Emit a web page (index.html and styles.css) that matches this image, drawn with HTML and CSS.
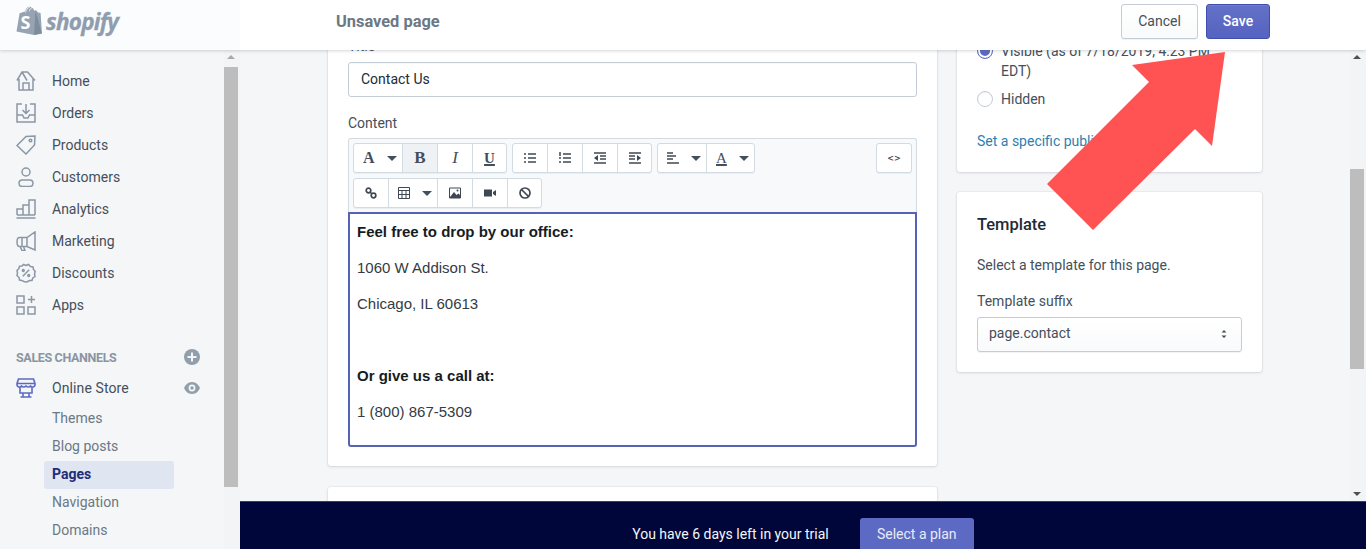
FILE: index.html
```html
<!DOCTYPE html>
<html lang="en">
<head>
<meta charset="utf-8">
<title>Unsaved page</title>
<link rel="stylesheet" href="styles.css">
</head>
<body>
<div class="app">
  <header class="topbar">
    <div class="brand">
      <svg class="bag" viewBox="0 0 26 29">
        <path class="bag-fill" d="M0.500 25.500 3.600 7.200 9 5.500C9.600 2.800 11.600.8 13.600.8c1 0 1.600.4 2 1 1.300.1 2.200 1.600 2.500 2.900l1.600-.4.8.5 1.600 1.700 2.500.4 1.400 20.800L18 29Z"/>
        <path class="bag-line" d="M9.600 6.500C10 3.500 11.700 1.500 13.600 1.500M13.400 5.200C13.800 3.500 14.700 2 15.800 2"/>
        <path class="bag-shade" d="M19.500 4.500 25.800 27.200 18 29Z"/>
        <text class="bag-s" x="4.500" y="23">S</text>
      </svg>
      <span class="wordmark">shopify</span>
    </div>
    <div class="bar-main">
      <span class="bar-title">Unsaved page</span>
      <div class="bar-actions">
        <button class="btn btn-cancel">Cancel</button>
        <button class="btn btn-save">Save</button>
      </div>
    </div>
  </header>

  <div class="body">
    <aside class="sidebar">
      <nav class="nav">
        <a class="nav-item">
          <svg class="nav-icon" viewBox="0 0 20 20"><path d="M1 9.500 6 1h5.500L19 9.500M3 8v11h14V8M7 19v-7h6v7M6 1l5 8.500"/></svg>
          Home
        </a>
        <a class="nav-item">
          <svg class="nav-icon" viewBox="0 0 20 20"><path d="M6 1H1v18h18V1h-5M1 12h5.500l1.500 3h4l1.500-3H19M10 1v9M6.500 7l3.500 3.500L13.500 7"/></svg>
          Orders
        </a>
        <a class="nav-item">
          <svg class="nav-icon" viewBox="0 0 20 20"><path d="M1 10.500 10 1.500l9-.5-.5 9-8.500 9Z"/><circle cx="14.500" cy="5.500" r="1.300"/></svg>
          Products
        </a>
        <a class="nav-item">
          <svg class="nav-icon" viewBox="0 0 20 20"><circle cx="10" cy="5" r="4"/><rect x="3" y="13" width="14" height="6.500" rx="3.250"/></svg>
          Customers
        </a>
        <a class="nav-item">
          <svg class="nav-icon" viewBox="0 0 20 20"><path d="M1 16v-6h6v6M7 16V6h6v10M13 16V1h6v15M1 16h18M0.500 19h19"/></svg>
          Analytics
        </a>
        <a class="nav-item">
          <svg class="nav-icon" viewBox="0 0 20 20"><path d="M19 1v18L11 15.500H6V6.500h5ZM11 6.500v9M6 6.500H3.500C2 6.500 1 8 1 11s1 4.500 2.500 4.500H6M4 15.500l2 4h3l-1.500-4"/></svg>
          Marketing
        </a>
        <a class="nav-item">
          <svg class="nav-icon" viewBox="0 0 20 20"><path d="M7.500 1.500 10 2.500 12.500 1.500 14.500 3.500 17 4 17.500 6.500 19.200 8.500 18.500 11 19 13.500 16.800 15 16 17.500 13.500 17.500 11 19 8.500 18.800 6 17.500 3.500 17 3 14.500 1 12.500 1.500 10 1 7.500 3 5.500 3.500 3.200 6 3Z"/><path d="M6.800 13.200 13.200 6.800"/><circle cx="7.300" cy="7.500" r=".9"/><circle cx="12.700" cy="12.500" r=".9"/></svg>
          Discounts
        </a>
        <a class="nav-item">
          <svg class="nav-icon" viewBox="0 0 20 20"><path d="M1 1h7v7H1ZM1 12h7v7H1ZM12 12h7v7h-7ZM15.500 1v7M12 4.500h7"/></svg>
          Apps
        </a>
      </nav>
      <div class="channels">
        <span class="channels-title">SALES CHANNELS</span>
        <svg class="round-icon" viewBox="0 0 16 16"><circle class="round-fill" cx="8" cy="8" r="8"/><path class="round-cut" d="M8 3.500v9M3.500 8h9"/></svg>
      </div>
      <div class="store-row">
        <svg class="store-icon" viewBox="0 0 20 20"><path d="M2.500 1h15l1.500 4.500v1.500a2.500 2.500 0 0 1-4.500 1 3 3 0 0 1-4.500 0 3 3 0 0 1-4.500 0A2.500 2.500 0 0 1 1 7V5.500ZM1 5.500h18M4 9.500V15h12V9.500M7 15v4h6v-4M4.500 19h11"/></svg>
        <span class="store-name">Online Store</span>
        <svg class="eye-icon" viewBox="0 0 16 12"><path class="round-fill" d="M8 0C4 0 1.300 3 0 6c1.300 3 4 6 8 6s6.700-3 8-6c-1.300-3-4-6-8-6Z"/><circle class="eye-white" cx="8" cy="6" r="3.400"/><circle class="round-fill" cx="8" cy="6" r="1.700"/></svg>
      </div>
      <ul class="subnav">
        <li class="sub-item">Themes</li>
        <li class="sub-item">Blog posts</li>
        <li class="sub-item sub-active">Pages</li>
        <li class="sub-item">Navigation</li>
        <li class="sub-item">Domains</li>
      </ul>
    </aside>
    <div class="scrollbar side-scroll">
      <span class="arrow-up"></span>
      <span class="thumb side-thumb"></span>
    </div>

    <div class="right">
      <div class="main-row">
        <main class="main">
          <div class="col-left">
            <section class="card card-editor">
              <label class="field-label">Title</label>
              <div class="input">Contact Us</div>
              <label class="field-label content-label">Content</label>
              <div class="toolbar">
                <div class="tool-rows">
                  <div class="tool-row">
                    <div class="group">
                      <span class="tool tool-wide"><span class="glyph glyph-a">A</span><i class="caret"></i></span>
                      <span class="tool tool-on"><b class="glyph">B</b></span>
                      <span class="tool"><em class="glyph">I</em></span>
                      <span class="tool"><u class="glyph glyph-u">U</u></span>
                    </div>
                    <div class="group">
                      <span class="tool"><svg class="ti" viewBox="0 0 12 12"><path d="M0 2h2M4 2h8M0 6h2M4 6h8M0 10h2M4 10h8"/></svg></span>
                      <span class="tool"><svg class="ti" viewBox="0 0 12 12"><path d="M1 0v4M0 6h2M0 10h2M4 2h8M4 6h8M4 10h8"/></svg></span>
                      <span class="tool"><svg class="ti" viewBox="0 0 12 12"><path d="M0 1h12M6 4h6M6 7h6M0 11h12"/><path class="ti-fill" d="M4 3v6L0 6Z"/></svg></span>
                      <span class="tool"><svg class="ti" viewBox="0 0 12 12"><path d="M0 1h12M0 4h6M0 7h6M0 11h12"/><path class="ti-fill" d="M8 3v6l4-3Z"/></svg></span>
                    </div>
                    <div class="group">
                      <span class="tool tool-wide"><svg class="ti" viewBox="0 0 12 12"><path d="M0 1h6M0 4h9M0 7h6M0 11h12"/></svg><i class="caret"></i></span>
                      <span class="tool tool-wide"><span class="glyph glyph-color">A</span><i class="caret"></i></span>
                    </div>
                  </div>
                  <div class="tool-row">
                    <div class="group">
                      <span class="tool"><svg class="ti ti-link" viewBox="0 0 12 12"><circle cx="3.500" cy="3.500" r="2.300"/><circle cx="8.500" cy="8.500" r="2.300"/><path d="M5 5l2 2"/></svg></span>
                      <span class="tool tool-wide"><svg class="ti ti-thin" viewBox="0 0 12 12"><path d="M.5.500h11v11H.5ZM.5 3.500h11M.5 7.500h11M4 3.500v8M8 3.500v8"/></svg><i class="caret"></i></span>
                      <span class="tool"><svg class="ti ti-thin" viewBox="0 0 12 12"><path d="M.5 1h11v10H.5Z"/><path class="ti-fill" d="M1 10 5 5l2.500 3 2-1.500L11 8v3H1Z"/><circle class="ti-fill" cx="8.500" cy="3.500" r="1"/></svg></span>
                      <span class="tool"><svg class="ti" viewBox="0 0 12 12"><path class="ti-fill" d="M0 2.500h8v7H0ZM9 5l3-2v6L9 7Z"/></svg></span>
                      <span class="tool"><svg class="ti ti-link" viewBox="0 0 12 12"><circle cx="6" cy="6" r="5"/><path d="M2.500 2.500l7 7"/></svg></span>
                    </div>
                  </div>
                </div>
                <div class="group"><span class="tool tool-code">&lt;&gt;</span></div>
              </div>
              <div class="editor">
                <p class="editor-p"><strong>Feel free to drop by our office:</strong></p>
                <p class="editor-p">1060 W Addison St.</p>
                <p class="editor-p">Chicago, IL 60613</p>
                <p class="editor-p">&nbsp;</p>
                <p class="editor-p"><strong>Or give us a call at:</strong></p>
                <p class="editor-p">1 (800) 867-5309</p>
              </div>
            </section>
            <section class="card card-next"></section>
          </div>
          <div class="col-right">
            <section class="card card-vis">
              <div class="radio-row">
                <span class="radio radio-on"></span>
                <span class="radio-text">Visible (as of 7/18/2019, 4:23 PM EDT)</span>
              </div>
              <div class="radio-row radio-row-2">
                <span class="radio"></span>
                <span class="radio-text">Hidden</span>
              </div>
              <a class="link">Set a specific publish date</a>
            </section>
            <section class="card card-template">
              <h2 class="card-title">Template</h2>
              <p class="card-text">Select a template for this page.</p>
              <label class="suffix-label">Template suffix</label>
              <div class="select">
                <span class="select-value">page.contact</span>
                <svg class="select-arrows" viewBox="0 0 6 10"><path d="M3 1 5.500 3.500H.5ZM3 9 .5 6.500H5.500Z"/></svg>
              </div>
            </section>
          </div>
        </main>
        <div class="scrollbar main-scroll">
          <span class="arrow-up"></span>
          <span class="thumb main-thumb"></span>
          <span class="arrow-down"></span>
        </div>
      </div>
      <footer class="banner">
        <span class="banner-text">You have 6 days left in your trial</span>
        <button class="btn-plan">Select a plan</button>
      </footer>
    </div>
  </div>

  <svg class="big-arrow" viewBox="0 0 190 190">
    <path d="M178 2 85 15 102 32 0 134 46 180 148 79 165 96Z"/>
  </svg>
</div>
</body>
</html>
```

FILE: styles.css
```css
* { box-sizing: border-box; }
html, body { margin: 0; height: 100%; }
body {
  font-family: Roboto, "Liberation Sans", sans-serif;
  font-size: 14px;
  color: #212b36;
  background: #f4f6f8;
  overflow: hidden;
}
.app { position: relative; display: flex; flex-direction: column; height: 100vh; overflow: hidden; }

/* Top bar */
.topbar {
  position: relative;
  z-index: 5;
  flex: 0 0 50px;
  display: flex;
  background: #fff;
  box-shadow: 0 1px 3px rgba(66, 71, 76, .22);
}
.brand {
  flex: 0 0 240px;
  display: flex;
  align-items: flex-start;
  padding: 6px 0 0 16px;
  gap: 4px;
  background: #fbfcfd;
}
.bag { width: 26px; height: 29px; display: block; }
.bag-fill { fill: #95a3b3; }
.bag-shade { fill: #7e8d9e; }
.bag-line { fill: none; stroke: #fff; stroke-width: .8; }
.bag-s { fill: #fff; font: 700 18px "Open Sans", sans-serif; }
.wordmark {
  font: italic 700 22.5px/32px "Open Sans", sans-serif;
  color: #8f9dae;
  letter-spacing: -.75px;
  -webkit-text-stroke: .3px #8f9dae;
}
.bar-main {
  flex: 1;
  display: flex;
  align-items: center;
  justify-content: space-between;
  padding: 0 96px 0 96px;
}
.bar-title { font-size: 16.400px; font-weight: 700; color: #6b7885; margin-top: -8px; }
.bar-actions { display: flex; gap: 8px; margin-top: -8px; }
.btn {
  height: 35px;
  border-radius: 3px;
  font: 400 14px Roboto, sans-serif;
  padding: 0;
}
.btn-cancel {
  width: 77px;
  color: #454f5b;
  background: linear-gradient(#fff, #f9fafb);
  border: 1px solid #c4cdd5;
  box-shadow: 0 1px 0 rgba(22, 29, 37, .05);
}
.btn-save {
  width: 64px;
  color: #fff;
  font-weight: 500;
  background: linear-gradient(#6371c7, #5563c1);
  border: 1px solid #3f4eae;
  box-shadow: inset 0 1px 0 #6f7bcc;
}

/* Layout */
.body { flex: 1; display: flex; min-height: 0; }
.sidebar { flex: 0 0 224px; padding-top: 15px; overflow: hidden; background: #f4f6f8; }
.scrollbar { display: flex; flex-direction: column; align-items: center; background: #f3f4f5; position: relative; }
.side-scroll { flex: 0 0 16px; align-items: flex-start; }
.main-scroll { flex: 0 0 16px; align-items: flex-start; }
.thumb { display: block; width: 14px; background: #bdbdbd; }
.side-thumb { height: 420px; margin-top: 8px; }
.main-thumb { height: 200px; margin-top: 110px; }
.arrow-up, .arrow-down {
  display: block;
  width: 0;
  height: 0;
  margin: 6px 0 0 3px;
  border-left: 4px solid transparent;
  border-right: 4px solid transparent;
}
.arrow-up { border-bottom: 4px solid #a9a9a9; margin-top: 5px; }
.main-scroll .arrow-up { border-bottom-color: #505050; }
.arrow-down { border-top: 4px solid #505050; margin-top: auto; margin-bottom: 5px; }

/* Sidebar */
.nav-item {
  display: flex;
  align-items: center;
  height: 32px;
  padding-left: 16px;
  gap: 16px;
  color: #454f5b;
  font-weight: 400;
}
.nav-icon { width: 20px; height: 20px; fill: none; stroke: #8a97a5; stroke-width: 1.500; margin-top: -1px; }
.channels {
  display: flex;
  align-items: center;
  justify-content: space-between;
  margin-top: 22px;
  padding: 0 24px 0 16px;
  height: 28px;
}
.channels-title { font-size: 12.500px; font-weight: 700; color: #8a95a1; letter-spacing: -.35px; }
.round-icon { width: 16px; height: 16px; display: block; }
.round-fill { fill: #919eab; }
.round-cut { stroke: #f4f6f8; stroke-width: 2; fill: none; }
.store-row { display: flex; align-items: center; height: 32px; padding: 0 24px 0 16px; margin-top: 1px; }
.store-icon { width: 20px; height: 20px; fill: none; stroke: #5c6ac4; stroke-width: 1.600; }
.store-name { flex: 1; margin-left: 16px; color: #454f5b; font-weight: 400; letter-spacing: .1px; }
.eye-icon { width: 16px; height: 12px; }
.eye-white { fill: #f4f6f8; }
.subnav { list-style: none; margin: 1px 0 0; padding: 0 0 0 44px; }
.sub-item {
  width: 130px;
  height: 28px;
  line-height: 27px;
  padding-left: 8px;
  border-radius: 3px;
  color: #6b7885;
}
.sub-active { background: #e0e5f2; color: #202e78; font-weight: 700; }

/* Main column */
.right { flex: 1; display: flex; flex-direction: column; min-width: 0; }
.main-row { flex: 1; display: flex; min-height: 0; }
.main {
  flex: 1;
  display: flex;
  gap: 20px;
  align-items: flex-start;
  padding-left: 88px;
  overflow: hidden;
  min-width: 0;
}
.col-left { flex: 0 0 609px; margin-top: -34px; }
.col-right { flex: 0 0 305px; margin-top: -34px; }
.card {
  background: #fff;
  border-radius: 3px;
  box-shadow: 0 0 0 1px rgba(63, 63, 68, .04), 0 1px 3px rgba(63, 63, 68, .14);
}
.card-editor { height: 450px; padding: 20px; margin-bottom: 21px; }
.card-next { height: 80px; }
.field-label { display: block; line-height: 20px; color: #454f5b; }
.input {
  height: 35px;
  margin-top: 6px;
  padding-left: 12px;
  line-height: 32px;
  border: 1px solid #c4cdd5;
  border-radius: 3px;
  color: #212b36;
  box-shadow: inset 0 1px 0 rgba(99, 115, 129, .05);
}
.content-label { margin-top: 16px; }
.toolbar {
  display: flex;
  justify-content: space-between;
  height: 74px;
  margin-top: 5px;
  padding: 4px 4px 0;
  background: #f7f9fb;
  border: 1px solid #d3dbe2;
  border-bottom: 0;
  border-radius: 3px 3px 0 0;
}
.tool-rows { display: flex; flex-direction: column; gap: 5px; }
.tool-row { display: flex; gap: 5px; }
.group {
  display: flex;
  height: 30px;
  background: #fff;
  border: 1px solid #d3dbe2;
  border-radius: 3px;
  box-shadow: 0 1px 0 rgba(22, 29, 37, .05);
}
.tool {
  width: 35px;
  display: flex;
  align-items: center;
  justify-content: center;
  border-left: 1px solid #d3dbe2;
  color: #454f5b;
}
.tool:first-child { border-left: 0; width: 34px; }
.tool:last-child { width: 34px; }
.tool-wide { width: 49px; justify-content: flex-start; padding-left: 9px; gap: 12px; }
.tool-wide:first-child, .tool-wide:last-child { width: 48px; }
.tool-on { background: #eff2f5; }
.glyph { font: 700 17px "Liberation Serif", serif; color: #454f5b; }
em.glyph { font-style: italic; font-weight: 400; }
.glyph-a { font-size: 16px; }
.glyph-u { text-decoration-thickness: 2px; font-size: 15px; }
.glyph-color { text-decoration: underline; text-decoration-thickness: 2px; font-size: 15px; font-weight: 400; }
.caret {
  width: 0;
  height: 0;
  border-left: 5px solid transparent;
  border-right: 5px solid transparent;
  border-top: 5px solid #454f5b;
}
.ti { width: 12px; height: 12px; fill: none; stroke: #3f4852; stroke-width: 1.500; flex: none; }
.ti-thin { stroke-width: 1; }
.ti-link { stroke-width: 1.700; }
.ti-fill { fill: #3f4852; stroke: none; }
.tool-code, .tool-code:first-child { width: 34px; font: 700 8px "DejaVu Sans", sans-serif; }
.editor {
  height: 235px;
  padding: 8px 7px;
  border: 2px solid #5563b4;
  border-radius: 0 0 3px 3px;
  font: 15px "Liberation Sans", Arial, sans-serif;
  color: #333b44;
}
.editor-p { margin: 0 0 16px; line-height: 20px; }
.editor strong { font-weight: 700; color: #161c23; }

/* Right column */
.card-vis { height: 156px; padding: 25px 20px 0; margin-bottom: 20px; }
.radio-row { display: flex; gap: 8px; line-height: 20px; color: #454f5b; }
.radio-row-2 { margin-top: 8px; }
.radio {
  flex: 0 0 16px;
  width: 16px;
  height: 16px;
  margin-top: 2px;
  border-radius: 50%;
  border: 1px solid #c4cdd5;
  background: #fff;
  box-shadow: inset 0 1px 1px rgba(0, 0, 0, .06);
}
.radio-on { border: 1px solid #5c6ac4; box-shadow: inset 0 0 0 2px #fff, inset 0 0 0 8px #5c6ac4; }
.link { display: block; margin-top: 22px; color: #2c7fb3; line-height: 20px; }
.card-template { height: 180px; padding: 20px; }
.card-title { margin: 3px 0 0; font-size: 16.500px; line-height: 20px; font-weight: 500; color: #212b36; }
.card-text { margin: 20px 0 0; line-height: 20px; color: #454f5b; }
.suffix-label { display: block; margin-top: 16px; line-height: 20px; color: #454f5b; }
.select {
  display: flex;
  align-items: center;
  justify-content: space-between;
  height: 35px;
  margin-top: 6px;
  padding: 0 14px 0 11px;
  background: linear-gradient(#fff, #f9fafb);
  border: 1px solid #c4cdd5;
  border-radius: 3px;
  color: #454f5b;
  box-shadow: 0 1px 0 rgba(22, 29, 37, .05);
}
.select-value { margin-top: -3px; }
.select-arrows { width: 6px; height: 10px; fill: #454f5b; margin-top: -1px; }

/* Banner */
.banner {
  flex: 0 0 48px;
  display: flex;
  justify-content: center;
  gap: 31px;
  padding: 16px 0 0;
  background: #000639;
  overflow: hidden;
  border-top: 1px solid #3a4063;
}
.banner-text { color: #f4f6f8; line-height: 32px; }
.btn-plan {
  flex: none;
  width: 114px;
  height: 35px;
  padding: 0 0 3px;
  border: 0;
  border-radius: 3px;
  background: #5c6ac4;
  color: #e8eaf6;
  font: 400 14px Roboto, sans-serif;
}

/* Annotation arrow */
.big-arrow {
  position: absolute;
  z-index: 10;
  left: 1047px;
  top: 50px;
  width: 190px;
  height: 190px;
  fill: #ff5252;
}
```
